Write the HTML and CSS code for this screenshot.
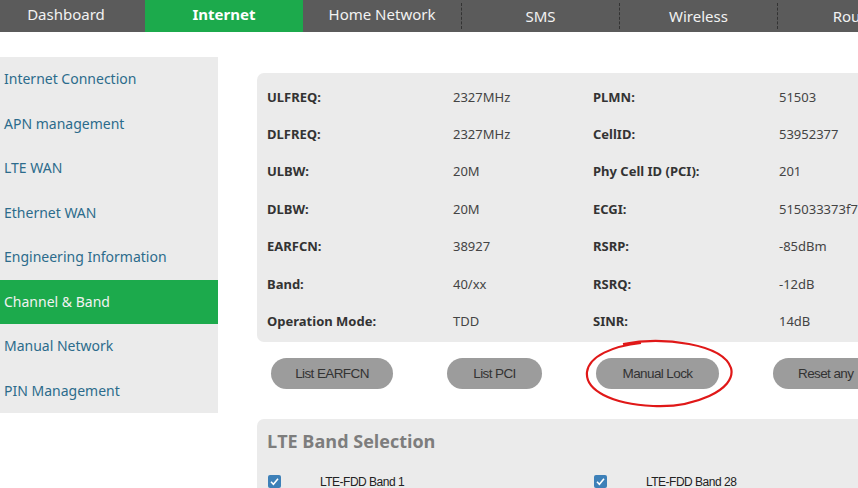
FILE: index.html
```html
<!DOCTYPE html>
<html lang="en">
  <head>
    <meta charset="UTF-8" />
    <meta name="viewport" content="width=device-width, initial-scale=1.0" />
    <title>Channel &amp; Band</title>
    <link rel="stylesheet" href="styles.css">
  </head>
  <body>
    <div class="topnav">
      <a class="tab">Dashboard</a>
      <a class="tab active">Internet</a>
      <a class="tab">Home Network</a>
      <a class="tab sep">SMS</a>
      <a class="tab sep">Wireless</a>
      <a class="tab sep">Router</a>
    </div>

    <div class="layout">
      <ul class="sidebar">
        <li>Internet Connection</li>
        <li>APN management</li>
        <li>LTE WAN</li>
        <li>Ethernet WAN</li>
        <li>Engineering Information</li>
        <li class="current">Channel &amp; Band</li>
        <li>Manual Network</li>
        <li>PIN Management</li>
      </ul>

      <div class="main">
        <div class="info-box">
          <div class="info-row">
            <span class="label">ULFREQ:</span><span class="value">2327MHz</span>
            <span class="label">PLMN:</span><span class="value">51503</span>
          </div>
          <div class="info-row">
            <span class="label">DLFREQ:</span><span class="value">2327MHz</span>
            <span class="label">CellID:</span><span class="value">53952377</span>
          </div>
          <div class="info-row">
            <span class="label">ULBW:</span><span class="value">20M</span>
            <span class="label">Phy Cell ID (PCI):</span><span class="value">201</span>
          </div>
          <div class="info-row">
            <span class="label">DLBW:</span><span class="value">20M</span>
            <span class="label">ECGI:</span><span class="value">515033373f7</span>
          </div>
          <div class="info-row">
            <span class="label">EARFCN:</span><span class="value">38927</span>
            <span class="label">RSRP:</span><span class="value">-85dBm</span>
          </div>
          <div class="info-row">
            <span class="label">Band:</span><span class="value">40/xx</span>
            <span class="label">RSRQ:</span><span class="value">-12dB</span>
          </div>
          <div class="info-row">
            <span class="label">Operation Mode:</span><span class="value">TDD</span>
            <span class="label">SINR:</span><span class="value">14dB</span>
          </div>
        </div>

        <div class="actions">
          <button class="btn btn-earfcn">List EARFCN</button>
          <button class="btn btn-pci">List PCI</button>
          <button class="btn btn-lock">Manual Lock
            <svg class="ring" width="152" height="72" viewBox="0 0 152 72">
              <path d="M40 6 C 80 -2, 140 6, 148 30 C 154 52, 110 70, 70 68 C 28 66, 2 52, 4 34 C 6 18, 30 8, 58 5" fill="none" stroke="#e01818" stroke-width="2.2"/>
            </svg>
          </button>
          <button class="btn btn-reset">Reset any</button>
        </div>

        <div class="band-box">
          <h3>LTE Band Selection</h3>
          <div class="band-row">
            <label class="band"><span class="check"><svg width="13" height="13" viewBox="0 0 13 13"><path d="M3 6.8 L5.4 9.2 L10 3.8" fill="none" stroke="#fff" stroke-width="1.6"/></svg></span>LTE-FDD Band 1</label>
            <label class="band"><span class="check"><svg width="13" height="13" viewBox="0 0 13 13"><path d="M3 6.8 L5.4 9.2 L10 3.8" fill="none" stroke="#fff" stroke-width="1.6"/></svg></span>LTE-FDD Band 28</label>
          </div>
        </div>
      </div>
    </div>
  </body>
</html>
```

FILE: styles.css
```css
body {
  margin: 0;
  background-color: #fff;
  font-family: 'Noto Sans', 'Open Sans', sans-serif;
  color: #333;
  overflow: hidden;
  width: 858px;
  height: 488px;
}
.topnav {
  display: flex;
  height: 32px;
  background-color: #5b5b5b;
  margin-left: -13px;
}
.tab {
  flex: 0 0 158px;
  display: flex;
  align-items: center;
  justify-content: center;
  padding-bottom: 4px;
  box-sizing: border-box;
  color: #f2f2f2;
  font-size: 15px;
}
.tab.active {
  background-color: #1caa4c;
  font-weight: bold;
  color: #fff;
}
.tab.sep {
  border-left: 1px dashed #333;
  margin: 3px 0;
  padding-bottom: 1px;
}
.layout {
  display: flex;
  align-items: flex-start;
}
.sidebar {
  list-style: none;
  margin: 25px 0 0;
  padding: 0;
  width: 218px;
  flex: 0 0 218px;
  background-color: #ebebeb;
}
.sidebar li {
  height: 44.5px;
  line-height: 44.5px;
  padding-left: 4px;
  font-size: 14px;
  color: #2c6b8c;
}
.sidebar li.current {
  background-color: #1caa4c;
  color: #f2f2f2;
}
.main {
  margin: 41px 0 0 39px;
  flex: 0 0 640px;
}
.info-box {
  background-color: #ebebeb;
  border-radius: 7px 0 0 7px;
  padding: 5px 0 2px 10px;
}
.info-row {
  display: grid;
  grid-template-columns: 186px 140px 186px 1fr;
  align-items: center;
  height: 37.4px;
  font-size: 13px;
}
.label {
  font-weight: bold;
  color: #333;
}
.value {
  color: #444;
}
.actions {
  display: flex;
  gap: 54px;
  margin: 16px 0 0 14px;
  white-space: nowrap;
}
.btn {
  height: 31px;
  padding: 0;
  border: none;
  border-radius: 16px;
  background-color: #9c9c9c;
  color: #333;
  font-family: 'Liberation Sans', sans-serif;
  font-size: 13.5px;
  letter-spacing: -0.6px;
  position: relative;
  flex: 0 0 auto;
}
.btn-earfcn { width: 122px; }
.btn-pci { width: 95px; }
.btn-lock { width: 123px; }
.btn-reset { width: 120px; text-align: left; padding-left: 25px; }
.ring {
  position: absolute;
  left: -13px;
  top: -20px;
}
.band-box {
  margin-top: 30px;
  background-color: #ebebeb;
  border-radius: 7px 0 0 0;
  padding: 10px 0 20px 10px;
}
.band-box h3 {
  margin: 0;
  font-family: 'Open Sans', sans-serif;
  font-size: 18px;
  font-weight: bold;
  color: #7d7d7d;
}
.band-row {
  display: grid;
  grid-template-columns: 326px 1fr;
  margin-top: 22px;
}
.band {
  display: flex;
  align-items: center;
  font-family: 'Liberation Sans', sans-serif;
  font-size: 12px;
  letter-spacing: -0.5px;
  color: #222;
}
.check {
  display: inline-flex;
  width: 13px;
  height: 13px;
  background-color: #3d80b8;
  border-radius: 2px;
  margin: 0 39px 0 1px;
}
```
